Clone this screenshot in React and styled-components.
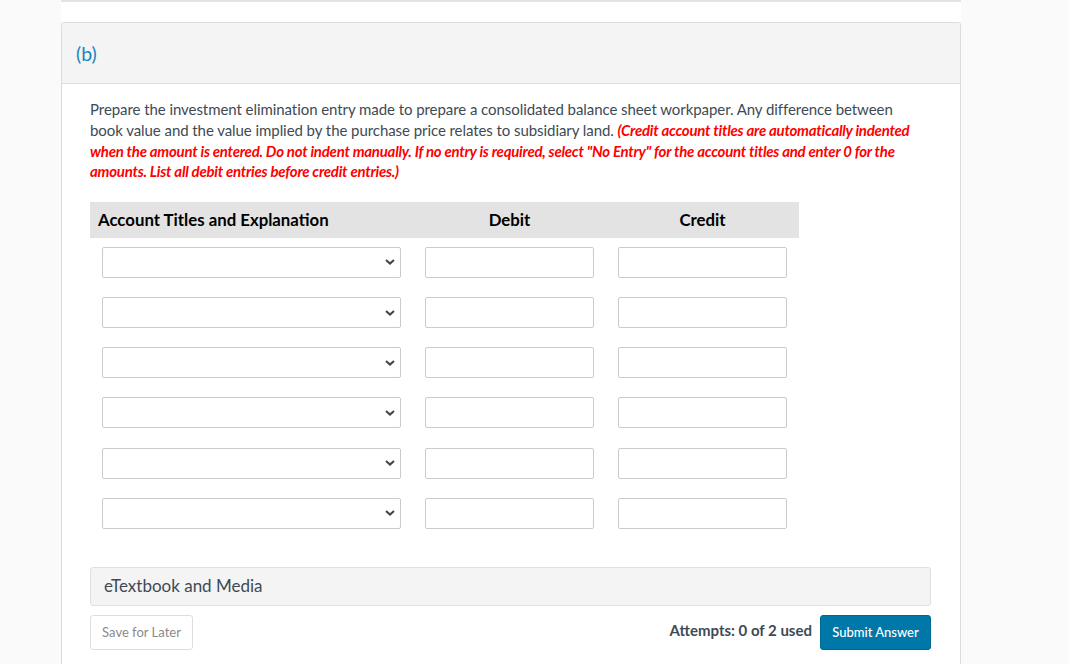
import React from "react";
import styled, { createGlobalStyle } from "styled-components";

const GlobalStyle = createGlobalStyle`
  html, body {
    margin: 0;
    padding: 0;
    height: 664px;
    overflow: hidden;
    background: #fafafa;
    font-family: Lato, "Open Sans", sans-serif;
  }
`;

const Column = styled.div`
  box-sizing: border-box;
  display: flex;
  flex-direction: column;
  width: 900px;
  height: 664px;
  margin-left: 61px;
  background: #fff;
  border-top: 2px solid #e3e3e3;
  padding-top: 20px;
`;

const Card = styled.section`
  flex: 1;
  border: 1px solid #dcdcdc;
  border-bottom: 0;
  border-radius: 3px 3px 0 0;
`;

const CardHeader = styled.header`
  box-sizing: border-box;
  height: 61px;
  padding: 0 14px;
  display: flex;
  align-items: center;
  background: #f4f4f4;
  border-bottom: 1px solid #dcdcdc;
  color: #1a84bf;
  font-size: 19.5px;
`;

const CardBody = styled.div`
  padding: 15px 29px 0 28px;
`;

const Question = styled.p`
  margin: 0;
  width: 830px;
  color: #3e4a54;
  font-size: 15px;
  line-height: 20.8px;
  letter-spacing: -0.065px;
`;

const Warning = styled.em`
  color: #ff0000;
  font-weight: 700;
  letter-spacing: -0.25px;
`;

const EntryTable = styled.div`
  width: 709px;
  margin-top: 19.8px;
`;

const HeaderRow = styled.div`
  display: grid;
  grid-template-columns: 323px 193px 193px;
  align-items: center;
  height: 36px;
  background: #e3e3e3;
  color: #000;
  font-size: 16.8px;
  font-weight: 700;
`;

const HeaderCell = styled.div`
  text-align: ${(p) => (p.$left ? "left" : "center")};
  padding-left: ${(p) => (p.$left ? "8px" : "0")};
`;

const Rows = styled.div`
  display: grid;
  grid-template-columns: 323px 193px 193px;
  grid-auto-rows: 31px;
  row-gap: 19.15px;
  padding-top: 9px;
`;

const AccountSelect = styled.select`
  box-sizing: border-box;
  appearance: none;
  width: 299px;
  height: 31px;
  margin-left: 12px;
  background: #fff url("data:image/svg+xml,%3Csvg xmlns='http://www.w3.org/2000/svg' width='10' height='6' viewBox='0 0 10 6'%3E%3Cpath d='M1 1l4 3.6L9 1' fill='none' stroke='%23444' stroke-width='2'/%3E%3C/svg%3E") no-repeat right 5px center;
  border: 1px solid #cbcbcb;
  border-radius: 2px;
  font-family: inherit;
  font-size: 14px;
`;

const AmountInput = styled.input`
  box-sizing: border-box;
  width: 169px;
  height: 31px;
  margin-left: 12px;
  padding: 0 6px;
  background: #fff;
  border: 1px solid #cbcbcb;
  border-radius: 2px;
  outline: none;
`;

const MediaBar = styled.div`
  box-sizing: border-box;
  display: flex;
  align-items: center;
  height: 39px;
  margin-top: 38px;
  padding: 0 13px 2px;
  width: 841px;
  background: #f4f4f4;
  border: 1px solid #e0e0e0;
  border-radius: 3px;
  color: #3e4a54;
  font-size: 17px;
`;

const Footer = styled.div`
  display: flex;
  align-items: center;
  width: 841px;
  margin-top: 9px;
`;

const SaveButton = styled.button`
  box-sizing: border-box;
  width: 103px;
  height: 35px;
  padding: 0 0 1px;
  background: #fff;
  border: 1px solid #dedede;
  border-radius: 3px;
  color: #8a8a8a;
  font-family: inherit;
  font-size: 13px;
`;

const Attempts = styled.span`
  margin-left: auto;
  margin-right: 8px;
  padding-bottom: 4px;
  color: #3e4a54;
  font-size: 15px;
  font-weight: 700;
`;

const SubmitButton = styled.button`
  box-sizing: border-box;
  width: 111px;
  height: 35px;
  padding: 0 0 1px;
  background: #0077a9;
  border: 1px solid #006a97;
  border-radius: 3px;
  color: #fff;
  font-family: inherit;
  font-size: 13px;
  font-weight: 500;
`;

const rows = [0, 1, 2, 3, 4, 5];

export default function App() {
  return (
    <>
      <GlobalStyle />
      <Column>
        <Card>
          <CardHeader>(b)</CardHeader>
          <CardBody>
            <Question>
              Prepare the investment elimination entry made to prepare a consolidated balance sheet
              workpaper. Any difference between book value and the value implied by the purchase
              price relates to subsidiary land.{" "}
              <Warning>
                (Credit account titles are automatically indented when the amount is entered. Do
                not indent manually. If no entry is required, select "No Entry" for the account
                titles and enter 0 for the amounts. List all debit entries before credit entries.)
              </Warning>
            </Question>
            <EntryTable>
              <HeaderRow>
                <HeaderCell $left>Account Titles and Explanation</HeaderCell>
                <HeaderCell>Debit</HeaderCell>
                <HeaderCell>Credit</HeaderCell>
              </HeaderRow>
              <Rows>
                {rows.map((r) => (
                  <React.Fragment key={r}>
                    <AccountSelect defaultValue="">
                      <option value=""></option>
                    </AccountSelect>
                    <AmountInput />
                    <AmountInput />
                  </React.Fragment>
                ))}
              </Rows>
            </EntryTable>
            <MediaBar>eTextbook and Media</MediaBar>
            <Footer>
              <SaveButton>Save for Later</SaveButton>
              <Attempts>Attempts: 0 of 2 used</Attempts>
              <SubmitButton>Submit Answer</SubmitButton>
            </Footer>
          </CardBody>
        </Card>
      </Column>
    </>
  );
}
